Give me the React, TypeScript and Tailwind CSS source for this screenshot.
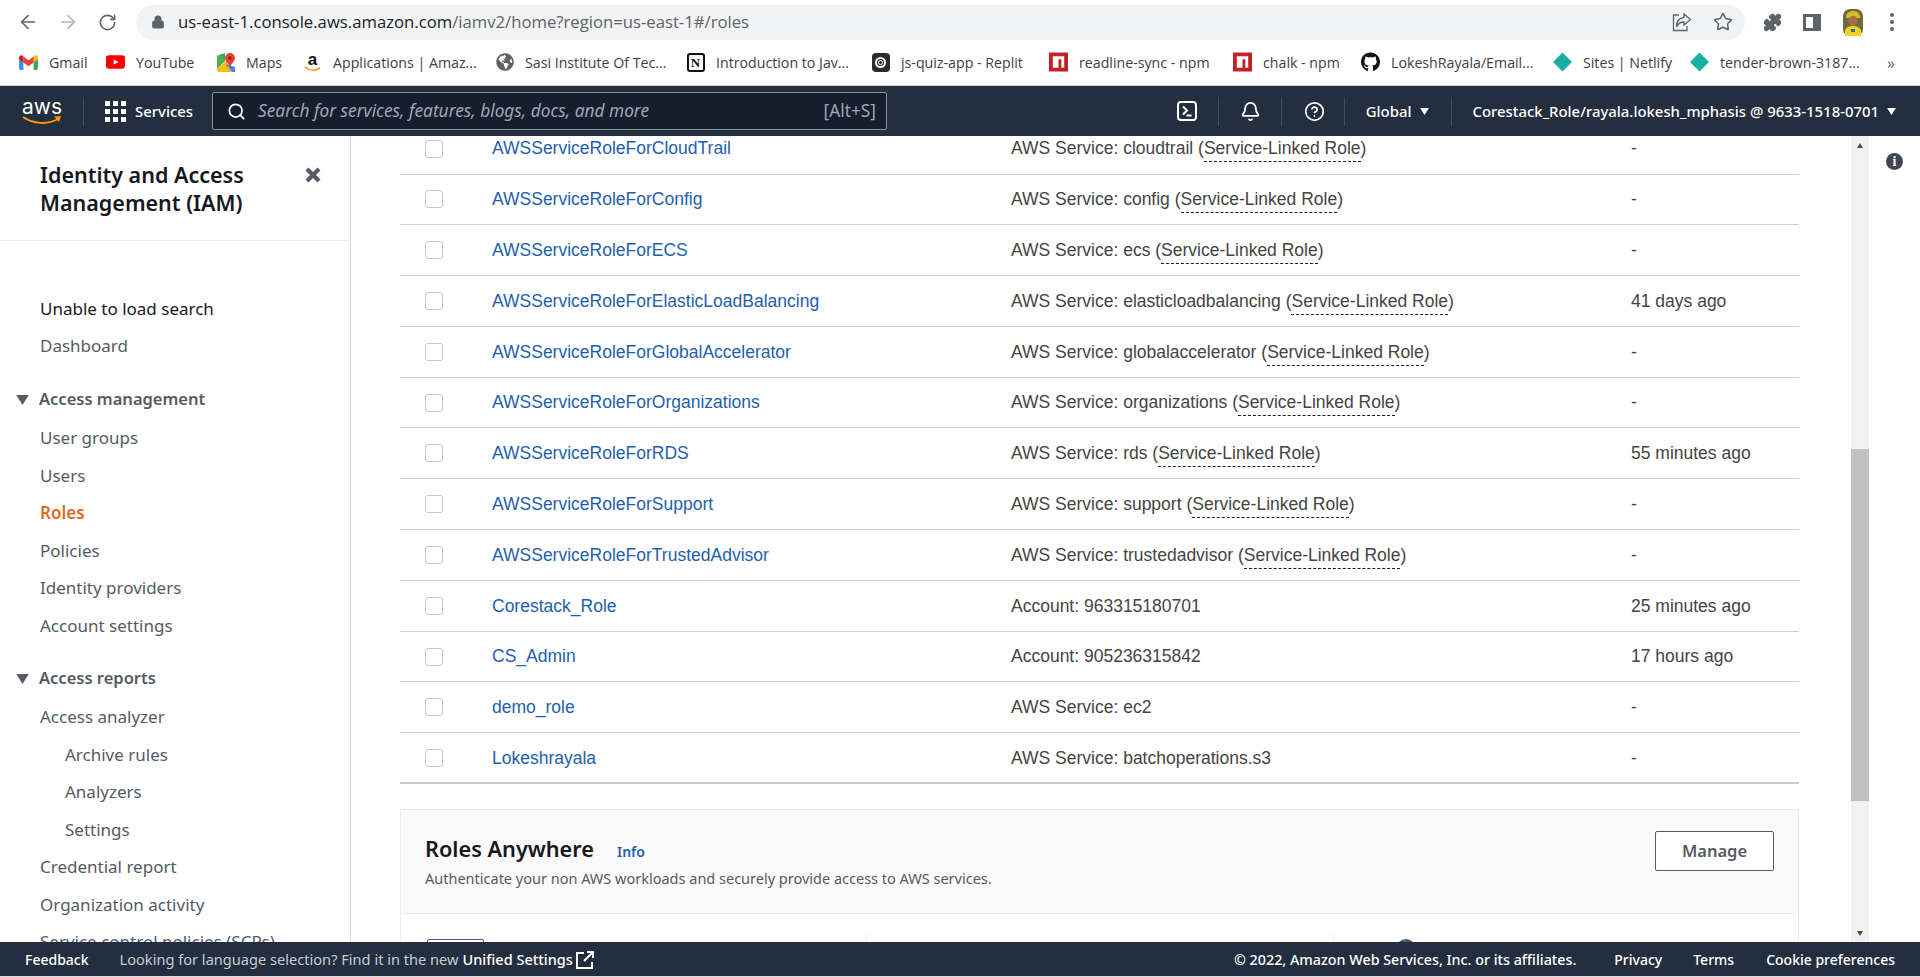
import type { ReactNode } from "react";
import { ArrowLeft, ArrowRight, Bell, CircleHelp, Lock, Puzzle, RotateCw, Search, Star } from "lucide-react";
import { FaGithub, FaGlobeAmericas } from "react-icons/fa";

const ui = "font-['Open_Sans',sans-serif]";
const ember = "font-['Noto_Sans',sans-serif]";
const arial = "font-['Liberation_Sans',Arial,sans-serif]";

function GmailIcon() {
  return (
    <svg viewBox="0 0 20 16" className="h-[15px] w-[19px]">
      <path d="M0 3v11.5A1.5 1.5 0 0 0 1.5 16H4.5V7z" fill="#4285f4" />
      <path d="M20 3v11.5a1.5 1.5 0 0 1-1.5 1.5h-3V7z" fill="#34a853" />
      <path d="M15.5 1.5V8L20 4.5V2.5C20 .6 17.8-.5 16.3.7z" fill="#fbbc04" />
      <path d="M4.5 8V1.5L10 5.6l5.5-4.1V8L10 12z" fill="#ea4335" />
      <path d="M0 2.5v2L4.5 8V1.5L3.7.7C2.2-.5 0 .6 0 2.5z" fill="#c5221f" />
    </svg>
  );
}

function YoutubeIcon() {
  return (
    <svg viewBox="0 0 20 14" className="h-[14px] w-[20px]">
      <rect width="20" height="14" rx="3" fill="#ff0000" />
      <path d="M8 4l5 3-5 3z" fill="#fff" />
    </svg>
  );
}

function MapsIcon() {
  return (
    <svg viewBox="0 0 18 19" className="h-[19px] w-[18px]">
      <path d="M0 3l8-3v8l-8 8z" fill="#34a853" />
      <path d="M0 16l9-8 6 11H2a2 2 0 0 1-2-2z" fill="#fbbc04" />
      <path d="M9 11l6 8h3v-5z" fill="#4285f4" />
      <path d="M0 3l4-2 4 6-8 8z" fill="#4caf50" />
      <path d="M13 0a5 5 0 0 1 5 5c0 3-3 5-5 9-2-4-5-6-5-9a5 5 0 0 1 5-5z" fill="#ea4335" />
      <circle cx="13" cy="5" r="1.7" fill="#8a1c14" />
    </svg>
  );
}

function AmazonIcon() {
  return (
    <span className="relative flex h-[20px] w-[17px] justify-center">
      <span className={`${arial} text-[17px] leading-[16px] font-bold text-[#111]`}>a</span>
      <svg viewBox="0 0 17 6" className="absolute bottom-0 left-0 h-[6px] w-[17px]">
        <path d="M1 1c4 4 10 4 15 1" fill="none" stroke="#f79400" strokeWidth="1.5" />
      </svg>
    </span>
  );
}

function NotionIcon() {
  return (
    <span className="flex h-[19px] w-[18px] items-center justify-center rounded-[3px] border-2 border-[#111] bg-white font-['Liberation_Serif',serif] text-[13px] leading-none font-bold text-[#111]">
      N
    </span>
  );
}

function ReplitIcon() {
  return (
    <span className="flex h-[19px] w-[18px] items-center justify-center rounded-[4px] bg-[#2c2c2c]">
      <span className="h-[11px] w-[11px] rounded-full border-[2px] border-white p-[1px]">
        <span className="block h-full w-full rounded-full border border-white" />
      </span>
    </span>
  );
}

function NpmIcon() {
  return (
    <svg viewBox="0 0 20 20" className="h-[20px] w-[20px]">
      <rect width="20" height="20" fill="#c12127" />
      <path d="M4 4h12v12h-3V7h-3v9H4z" fill="#fff" />
    </svg>
  );
}

function NetlifyIcon() {
  return (
    <svg viewBox="0 0 20 20" className="h-[20px] w-[20px]">
      <path d="M10 0l10 10-10 10L0 10z" fill="#15b0a1" />
    </svg>
  );
}

const bookmarks: { label: string; icon: ReactNode; width: string }[] = [
  { label: "Gmail", icon: <GmailIcon />, width: "w-[87px]" },
  { label: "YouTube", icon: <YoutubeIcon />, width: "w-[110px]" },
  { label: "Maps", icon: <MapsIcon />, width: "w-[87px]" },
  { label: "Applications | Amaz...", icon: <AmazonIcon />, width: "w-[192px]" },
  { label: "Sasi Institute Of Tec...", icon: <FaGlobeAmericas className="h-[18px] w-[18px] text-[#5f6368]" />, width: "w-[191px]" },
  { label: "Introduction to Jav...", icon: <NotionIcon />, width: "w-[185px]" },
  { label: "js-quiz-app - Replit", icon: <ReplitIcon />, width: "w-[178px]" },
  { label: "readline-sync - npm", icon: <NpmIcon />, width: "w-[184px]" },
  { label: "chalk - npm", icon: <NpmIcon />, width: "w-[128px]" },
  { label: "LokeshRayala/Email...", icon: <FaGithub className="h-[20px] w-[20px] text-[#111]" />, width: "w-[192px]" },
  { label: "Sites | Netlify", icon: <NetlifyIcon />, width: "w-[137px]" },
  { label: "tender-brown-3187...", icon: <NetlifyIcon />, width: "w-[190px]" },
];

function ShareIcon() {
  return (
    <svg viewBox="0 0 20 20" className="h-[20px] w-[20px]" fill="none" stroke="#5f6368" strokeWidth="1.3">
      <path d="M7 3H1.5v15.5H15V14" />
      <path d="M12 2l6.5 5.5L12 13V10C8 10 6 11.5 4.5 15c0-5.500 2.500-9 7.500-9.500z" />
    </svg>
  );
}

function Avatar() {
  return (
    <svg viewBox="0 0 20 27" className="h-[27px] w-[20px]">
      <rect width="20" height="27" rx="7" fill="#6f6a3a" />
      <path d="M3 9c0-5 3-7 7-7s7 2 7 7z" fill="#d8b92a" />
      <ellipse cx="10" cy="12" rx="4.5" ry="5" fill="#a5703f" />
      <path d="M2 27v-5c0-3 4-5 8-5s8 2 8 5v5z" fill="#f1d224" />
      <path d="M8 20h4v3H8z" fill="#2d6bb3" />
    </svg>
  );
}

function TerminalIcon() {
  return (
    <svg viewBox="0 0 20 20" className="h-[20px] w-[20px]" fill="none" stroke="#fff" strokeWidth="2">
      <rect x="1" y="1" width="18" height="18" rx="3" />
      <path d="M6 5.500l4 4-4 4M9.500 14.500h5" />
    </svg>
  );
}

function ChromeBar() {
  return (
    <div className={`${ui} flex h-[44px] items-center bg-white`}>
      <ArrowLeft className="ml-[17px] h-[22px] w-[22px] text-[#5f6368]" strokeWidth={1.7} />
      <ArrowRight className="ml-[18px] h-[22px] w-[22px] text-[#b3b6b9]" strokeWidth={1.7} />
      <RotateCw className="ml-[19px] h-[19px] w-[19px] text-[#5f6368]" strokeWidth={2} />
      <div className="ml-[19px] flex h-[35px] w-[1609px] items-center rounded-full bg-[#f1f3f4] pr-[12px] pl-[15px]">
        <Lock className="h-[14px] w-[14px] fill-[#5f6368] text-[#5f6368]" strokeWidth={2} />
        <span className="ml-[13px] text-[16.7px] text-[#202124]">
          us-east-1.console.aws.amazon.com<span className="text-[#5f6368]">/iamv2/home?region=us-east-1#/roles</span>
        </span>
        <span className="ml-auto flex items-center gap-[21px]">
          <ShareIcon />
          <Star className="h-[20px] w-[20px] text-[#5f6368]" strokeWidth={1.8} />
        </span>
      </div>
      <Puzzle className="ml-[18px] h-[19px] w-[19px] fill-[#5f6368] text-[#5f6368]" />
      <span className="ml-[21px] block h-[17px] w-[18px] border-[3px] border-r-[8px] border-[#5f6368]" />
      <span className="ml-[22px]">
        <Avatar />
      </span>
      <span className="ml-[27px] flex flex-col gap-[3px]">
        <span className="h-[4px] w-[4px] rounded-full bg-[#5f6368]" />
        <span className="h-[4px] w-[4px] rounded-full bg-[#5f6368]" />
        <span className="h-[4px] w-[4px] rounded-full bg-[#5f6368]" />
      </span>
    </div>
  );
}

function BookmarkBar() {
  return (
    <div className={`${ui} flex h-[41px] items-center pb-[4px] pl-[19px] text-[14.2px] whitespace-nowrap text-[#3c4043]`}>
      {bookmarks.map((b) => (
        <div key={b.label} className={`flex items-center gap-[11px] ${b.width}`}>
          <span className="flex w-[19px] shrink-0 justify-center">{b.icon}</span>
          <span>{b.label}</span>
        </div>
      ))}
      <span className="ml-[7px] text-[16px] text-[#5f6368]">»</span>
    </div>
  );
}

function Divider({ className = "" }: { className?: string }) {
  return <span className={`h-[29px] w-px bg-[#414d5c] ${className}`} />;
}

function Caret({ className }: { className: string }) {
  return (
    <svg viewBox="0 0 10 8" className={className} fill="currentColor">
      <path d="M0 0h10L5 8z" />
    </svg>
  );
}

function AwsHeader() {
  return (
    <header className={`${ember} flex h-[51px] items-center border-t border-t-[#c9ccd0] bg-[#232f3e] text-[14.9px] font-medium whitespace-nowrap text-white`}>
      <div className="ml-[22px] flex w-[40px] flex-col items-center">
        <span className="font-['Inter',sans-serif] text-[21px] leading-[17px] font-normal">aws</span>
        <svg viewBox="0 0 40 10" className="h-[10px] w-[40px]">
          <path d="M1 2c10 7 25 8 35 2" fill="none" stroke="#ff9900" strokeWidth="2" />
          <path d="M32 1.500l7-.5-2 6z" fill="#ff9900" />
        </svg>
      </div>
      <Divider className="ml-[21px]" />
      <span className="ml-[21px] grid grid-cols-3 gap-[3px]">
        {Array.from({ length: 9 }).map((_, i) => (
          <span key={i} className="h-[5px] w-[5px] bg-white" />
        ))}
      </span>
      <span className="ml-[9px] w-[57px]">Services</span>
      <div className="ml-[20px] flex h-[38px] w-[675px] items-center rounded-[2px] border border-[#879196] bg-[#161e2d] pr-[10px] pl-[14px] font-normal text-[#9ba7b6]">
        <Search className="h-[19px] w-[19px] text-white" strokeWidth={2.2} />
        <span className="ml-[12px] text-[17.3px] italic">Search for services, features, blogs, docs, and more</span>
        <span className="ml-auto text-[17.3px]">[Alt+S]</span>
      </div>
      <div className="ml-auto flex items-center">
        <TerminalIcon />
        <Divider className="ml-[21px]" />
        <Bell className="ml-[21px] h-[21px] w-[21px]" strokeWidth={2} />
        <Divider className="ml-[20px]" />
        <CircleHelp className="ml-[22px] h-[21px] w-[21px]" strokeWidth={2} />
        <Divider className="ml-[19px]" />
        <span className="ml-[21px]">Global</span>
        <Caret className="ml-[9px] h-[7px] w-[9px]" />
        <Divider className="ml-[22px]" />
        <span className="ml-[20px]">Corestack_Role/rayala.lokesh_mphasis @ 9633-1518-0701</span>
        <Caret className="mr-[24px] ml-[8px] h-[7px] w-[9px]" />
      </div>
    </header>
  );
}

function NavItem({ label, indent = false, active = false, strong = false }: { label: string; indent?: boolean; active?: boolean; strong?: boolean }) {
  const color = active ? "font-semibold text-[#dd6b1f]" : strong ? "text-[#16191f]" : "text-[#545b64]";
  const pad = indent ? "pl-[65px]" : "pl-[40px]";
  return <div className={`flex h-[37.5px] items-center ${pad} ${color}`}>{label}</div>;
}

function NavSection({ label }: { label: string }) {
  return (
    <div className="flex h-[39px] items-center pl-[16px] text-[16.5px] font-semibold text-[#545b64]">
      <Caret className="h-[10px] w-[13px]" />
      <span className="ml-[10px]">{label}</span>
    </div>
  );
}

function Sidebar() {
  return (
    <aside className={`${ember} h-full w-[351px] shrink-0 overflow-hidden border-r border-[#d5dbdb] bg-white text-[17px]`}>
      <div className="flex h-[105px] border-b border-[#eaeded] pt-[25px] pr-[29px] pl-[40px]">
        <h1 className="text-[21.5px] leading-[28px] font-semibold text-[#16191f]">
          Identity and Access
          <br />
          Management (IAM)
        </h1>
        <svg viewBox="0 0 16 16" className="mt-[6px] ml-auto h-[16px] w-[16px]" stroke="#545b64" strokeWidth="4.200">
          <path d="M2 2l12 12M14 2L2 14" />
        </svg>
      </div>
      <div className="pt-[48.5px]">
        <NavItem label="Unable to load search" strong />
        <NavItem label="Dashboard" />
        <div className="h-[15.5px]" />
        <NavSection label="Access management" />
        <NavItem label="User groups" />
        <NavItem label="Users" />
        <NavItem label="Roles" active />
        <NavItem label="Policies" />
        <NavItem label="Identity providers" />
        <NavItem label="Account settings" />
        <div className="h-[15px]" />
        <NavSection label="Access reports" />
        <NavItem label="Access analyzer" />
        <NavItem label="Archive rules" indent />
        <NavItem label="Analyzers" indent />
        <NavItem label="Settings" indent />
        <NavItem label="Credential report" />
        <NavItem label="Organization activity" />
        <NavItem label="Service control policies (SCPs)" />
      </div>
    </aside>
  );
}

const roles = [
  { name: "AWSServiceRoleForCloudTrail", trusted: "cloudtrail", linked: true, last: "-" },
  { name: "AWSServiceRoleForConfig", trusted: "config", linked: true, last: "-" },
  { name: "AWSServiceRoleForECS", trusted: "ecs", linked: true, last: "-" },
  { name: "AWSServiceRoleForElasticLoadBalancing", trusted: "elasticloadbalancing", linked: true, last: "41 days ago" },
  { name: "AWSServiceRoleForGlobalAccelerator", trusted: "globalaccelerator", linked: true, last: "-" },
  { name: "AWSServiceRoleForOrganizations", trusted: "organizations", linked: true, last: "-" },
  { name: "AWSServiceRoleForRDS", trusted: "rds", linked: true, last: "55 minutes ago" },
  { name: "AWSServiceRoleForSupport", trusted: "support", linked: true, last: "-" },
  { name: "AWSServiceRoleForTrustedAdvisor", trusted: "trustedadvisor", linked: true, last: "-" },
  { name: "Corestack_Role", account: "963315180701", last: "25 minutes ago" },
  { name: "CS_Admin", account: "905236315842", last: "17 hours ago" },
  { name: "demo_role", trusted: "ec2", last: "-" },
  { name: "Lokeshrayala", trusted: "batchoperations.s3", last: "-" },
];

function RoleRow({ role, isLast }: { role: (typeof roles)[number]; isLast: boolean }) {
  return (
    <div className={`flex h-[50.8px] items-center ${isLast ? "border-b-2 border-[#cccccc]" : "border-b border-[#cfcfcf]"}`}>
      <span className="ml-[25px] h-[18px] w-[18px] shrink-0 rounded-[3px] border border-[#c6c6c6] bg-white" />
      <a className="ml-[49px] w-[519px] shrink-0 text-[#1f5fae]">{role.name}</a>
      <span className="w-[620px] shrink-0 text-[#444444]">
        {role.account ? (
          `Account: ${role.account}`
        ) : (
          <>
            AWS Service: {role.trusted}
            {role.linked && (
              <>
                {" ("}
                <span className="border-b border-dashed border-[#16191f] pb-[3px]">Service-Linked Role</span>)
              </>
            )}
          </>
        )}
      </span>
      <span className="text-[#444444]">{role.last}</span>
    </div>
  );
}

function RolesAnywhere() {
  return (
    <section className={`${ember} mt-[25px] border border-[#eaeded] bg-white`}>
      <div className="flex h-[104px] items-start border-b border-[#eaeded] bg-[#fafafa] px-[24px] pt-[24px]">
        <div>
          <div className="flex items-baseline">
            <h2 className="text-[21.7px] leading-[30px] font-semibold text-[#16191f]">Roles Anywhere</h2>
            <span className="ml-[23px] text-[14px] font-semibold text-[#1f5fae]">Info</span>
          </div>
          <p className="mt-[4px] text-[14.5px] text-[#545b64]">Authenticate your non AWS workloads and securely provide access to AWS services.</p>
        </div>
        <button className="mt-[-3px] ml-auto h-[40px] w-[119px] rounded-[2px] border border-[#545b64] bg-white text-[16.5px] font-semibold text-[#545b64]">
          Manage
        </button>
      </div>
      <div className="flex h-[60px] pt-[20px]">
        <div className="mt-[5px] ml-[26px] h-[30px] w-[57px] rounded-[2px] border border-[#545b64]" />
        <div className="ml-[382px] h-[40px] w-px bg-[#eaeded]" />
        <div className="ml-[466px] h-[40px] w-px bg-[#eaeded]" />
        <div className="mt-[5px] ml-[62px] h-[20px] w-[20px] rounded-full bg-[#545b64]" />
      </div>
    </section>
  );
}

function Scrollbar() {
  return (
    <div className="flex h-full w-[18px] shrink-0 flex-col bg-[#f1f1f1]">
      <div className="flex h-[18px] items-center justify-center">
        <Caret className="h-[5px] w-[8px] rotate-180 text-[#505050]" />
      </div>
      <div className="mt-[295px] h-[352px] bg-[#c1c1c1]" />
      <div className="mt-auto flex h-[18px] items-center justify-center">
        <Caret className="h-[5px] w-[8px] text-[#505050]" />
      </div>
    </div>
  );
}

function Footer() {
  return (
    <footer className={`${ember} flex h-[35px] shrink-0 items-center border-b border-b-[#dddddd] bg-[#232f3e] pt-[1px] text-[14px] whitespace-nowrap text-white`}>
      <span className="ml-[25px] font-medium">Feedback</span>
      <span className="ml-[31px] text-[14.6px] text-[#c5cbd2]">Looking for language selection? Find it in the new</span>
      <span className="ml-[4px] text-[14.5px] font-medium">Unified Settings</span>
      <svg viewBox="0 0 18 18" className="ml-[3px] h-[18px] w-[18px]" fill="none" stroke="#fff" strokeWidth="2">
        <path d="M8 2H1v15h15v-6" />
        <path d="M11 1h6v6M17 1L8 10" />
      </svg>
      <div className="ml-auto flex items-center pr-[25px] font-medium">
        <span className="text-[14.3px]">© 2022, Amazon Web Services, Inc. or its affiliates.</span>
        <span className="ml-[38px]">Privacy</span>
        <span className="ml-[31px]">Terms</span>
        <span className="ml-[32px]">Cookie preferences</span>
      </div>
    </footer>
  );
}

export default function App() {
  return (
    <div className="flex h-[977px] w-[1920px] flex-col overflow-hidden bg-white">
      <ChromeBar />
      <BookmarkBar />
      <AwsHeader />
      <main className="flex min-h-0 flex-1">
        <Sidebar />
        <div className="min-w-0 flex-1 overflow-hidden pl-[49px]">
          <div className={`${arial} mt-[-12.3px] w-[1399px] text-[17.5px]`}>
            {roles.map((role, i) => (
              <RoleRow key={role.name} role={role} isLast={i === roles.length - 1} />
            ))}
            <RolesAnywhere />
          </div>
        </div>
        <Scrollbar />
        <div className="flex w-[51px] shrink-0 justify-center pt-[17px]">
          <span className="flex h-[17px] w-[17px] items-center justify-center rounded-full bg-[#414750] font-['Liberation_Serif',serif] text-[14px] leading-none font-bold text-white">
            i
          </span>
        </div>
      </main>
      <Footer />
    </div>
  );
}
